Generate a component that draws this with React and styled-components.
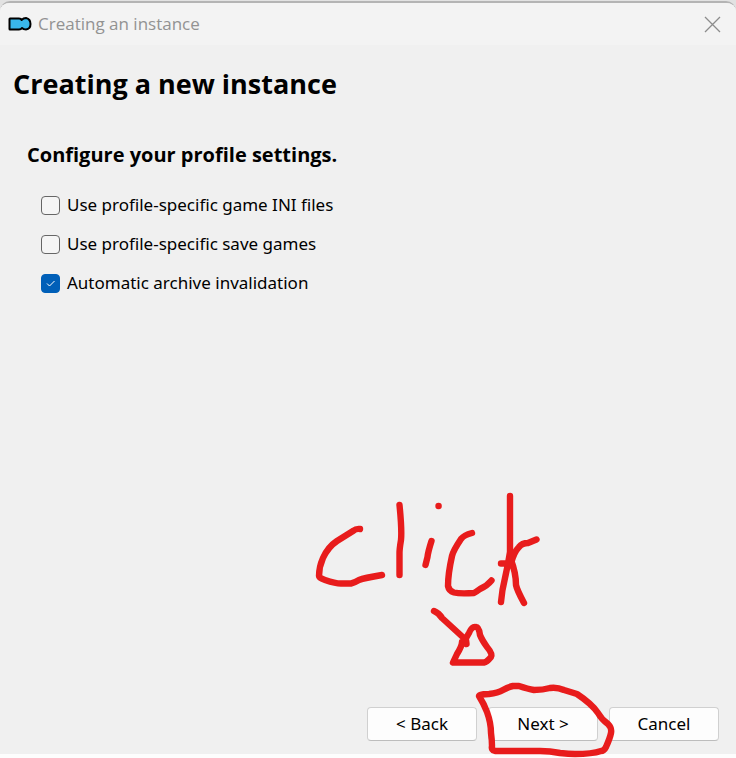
import React from "react";
import styled, { createGlobalStyle } from "styled-components";

const GlobalStyle = createGlobalStyle`
  *, *::before, *::after { box-sizing: border-box; }
  body {
    margin: 0;
    background: #fdfdfd;
    color: #000;
    font-family: "Noto Sans", "Open Sans", sans-serif;
    font-size: 17px;
    line-height: 24px;
  }
`;

const Desktop = styled.div`
  position: relative;
  display: flex;
  flex-direction: column;
  min-height: 100vh;
  padding: 1px 0 4px;
  background: linear-gradient(#e2e2e2 0 16px, #fdfdfd 16px);
`;

const Dialog = styled.main`
  display: flex;
  flex: 1;
  flex-direction: column;
  overflow: hidden;
  border-top: 2px solid #b4b4b4;
  border-radius: 10px 10px 0 0;
  background: #f0f0f0;
`;

const TitleBar = styled.header`
  display: flex;
  align-items: center;
  gap: 6px;
  height: 42px;
  padding: 0 12px 0 8px;
  background: #f3f3f3;
  color: #929292;
`;

const WindowTitle = styled.span`
  flex: 1;
  font-family: "Open Sans", "Noto Sans", sans-serif;
`;

const CloseButton = styled.button`
  display: flex;
  padding: 2px;
  border: 0;
  background: none;
  color: #8c8c8c;
`;

const Content = styled.div`
  flex: 1;
  padding: 21px 13px;
`;

const Heading = styled.h1`
  margin: 0;
  font-family: "Open Sans", "Noto Sans", sans-serif;
  font-size: 27px;
  line-height: 36px;
`;

const Settings = styled.fieldset`
  display: flex;
  flex-direction: column;
  gap: 15px;
  margin: 39px 0 0;
  padding: 0 14px;
  border: 0;
`;

const Legend = styled.legend`
  padding: 0;
  margin-bottom: 24px;
  font-family: "Open Sans", "Noto Sans", sans-serif;
  font-size: 20px;
  line-height: 28px;
  font-weight: 700;
`;

const Option = styled.label`
  display: flex;
  align-items: center;
  align-self: flex-start;
  gap: 7px;
  margin-left: 14px;
`;

const Checkbox = styled.input`
  appearance: none;
  width: 19px;
  height: 19px;
  margin: 0;
  border: 1px solid #666;
  border-radius: 4px;
  background: #f5f5f5;

  &:checked {
    border-color: #005fb8;
    background: #005fb8
      url("data:image/svg+xml,%3Csvg xmlns='http://www.w3.org/2000/svg' viewBox='0 0 17 17'%3E%3Cpath d='M5 8.5l2.5 2.5L12.5 6' fill='none' stroke='white'/%3E%3C/svg%3E")
      center / 17px 17px;
  }
`;

const Footer = styled.footer`
  display: flex;
  justify-content: flex-end;
  gap: 11px;
  padding: 0 17px 13px;
`;

const Button = styled.button`
  width: 110px;
  height: 34px;
  padding: 0;
  border: 1px solid #d0d0d0;
  border-bottom-color: #bdbdbd;
  border-radius: 4px;
  background: #fdfdfd;
  color: #000;
  font: inherit;
`;

const Annotation = styled.svg`
  position: absolute;
  right: 116px;
  bottom: 0;
  width: 310px;
  height: 273px;
  pointer-events: none;
`;

const options = [
  { label: "Use profile-specific game INI files", checked: false },
  { label: "Use profile-specific save games", checked: false },
  { label: "Automatic archive invalidation", checked: true },
];

function AppIcon() {
  return (
    <svg width="24" height="16" viewBox="0 0 24 16" aria-hidden="true">
      <path
        d="M2 2.500H11Q13 2.500 13.500 4Q15.500 2 18 2Q22.500 3 22.500 8T18 13.500Q15.500 13.500 14 12Q13 13.500 11 13.500H2Q1.500 13.500 1.500 13V3Q1.500 2.500 2 2.500Z"
        fill="#39b7eb"
        stroke="#000"
        strokeWidth="2"
        strokeLinejoin="round"
      />
    </svg>
  );
}

function CloseIcon() {
  return (
    <svg width="19" height="19" viewBox="0 0 19 19" fill="none" stroke="currentColor" strokeWidth="1.3" aria-hidden="true">
      <path d="M2 2l15 15M17 2L2 17" />
    </svg>
  );
}

function ClickAnnotation() {
  return (
    <Annotation viewBox="310 485 310 273" role="img" aria-label="click Next">
      <g fill="none" stroke="#e81c1c" strokeWidth="6.4" strokeLinecap="round" strokeLinejoin="round">
        <path d="M360 529Q356 528.500 353 531L337 541Q328 547 323 558Q319 567 319 576Q319 578 325 580Q337 584 342 583.500H351Q354 583 359 580Q364 578 382 575" />
        <path d="M399.500 505Q402 530 401 540Q399.500 549 399.500 553V575" />
        <path d="M438.500 506h.1" />
        <path d="M431.500 541Q428 552 427.500 557L425.500 565" />
        <path d="M472 533Q464 535 461 539Q453 551 452 556Q448 574 448 586Q449 591 454 592.500Q460 594 474 593Q476 592 480 589Q487 586 491.500 580.500" />
        <path d="M510 496V552Q508 565 505 578Q502 590 501 602M501 563.500H511Q514 552 519 547Q522 543 528 543L536.500 539.500M511 560Q516 573 516 585Q517 590 524 603" />
        <path d="M434 611Q439 613 442 618L466 640L466.500 644M462 642Q462 646 457 654L453 662.500H484Q487 662 491 657Q493 654 487 647Q482 640 480 635Q479 627 476 627Q472 626 469 633L465 640" />
        <path d="M479 696Q479 694 489 694Q498 693 503 690Q508 687 513 686H519Q528 689 534 690Q543 690 550 688Q557 687 564 690L577 694Q592 704 598 713Q602 720 608 724Q612 728 611 733Q610 738 606 747Q604 751 601 751Q592 754 575 754Q569 754 560 753Q550 751 540 751H495Q491 750 492 746Q492 740 491 733Q491 723 487 712Q484 704 479 696Z" />
      </g>
    </Annotation>
  );
}

export default function App() {
  return (
    <>
      <GlobalStyle />
      <Desktop>
        <Dialog>
          <TitleBar>
            <AppIcon />
            <WindowTitle>Creating an instance</WindowTitle>
            <CloseButton type="button" aria-label="Close">
              <CloseIcon />
            </CloseButton>
          </TitleBar>
          <Content>
            <Heading>Creating a new instance</Heading>
            <Settings>
              <Legend>Configure your profile settings.</Legend>
              {options.map(({ label, checked }) => (
                <Option key={label}>
                  <Checkbox type="checkbox" defaultChecked={checked} />
                  {label}
                </Option>
              ))}
            </Settings>
          </Content>
          <Footer>
            <Button type="button">&lt; Back</Button>
            <Button type="button">Next &gt;</Button>
            <Button type="button">Cancel</Button>
          </Footer>
        </Dialog>
        <ClickAnnotation />
      </Desktop>
    </>
  );
}
